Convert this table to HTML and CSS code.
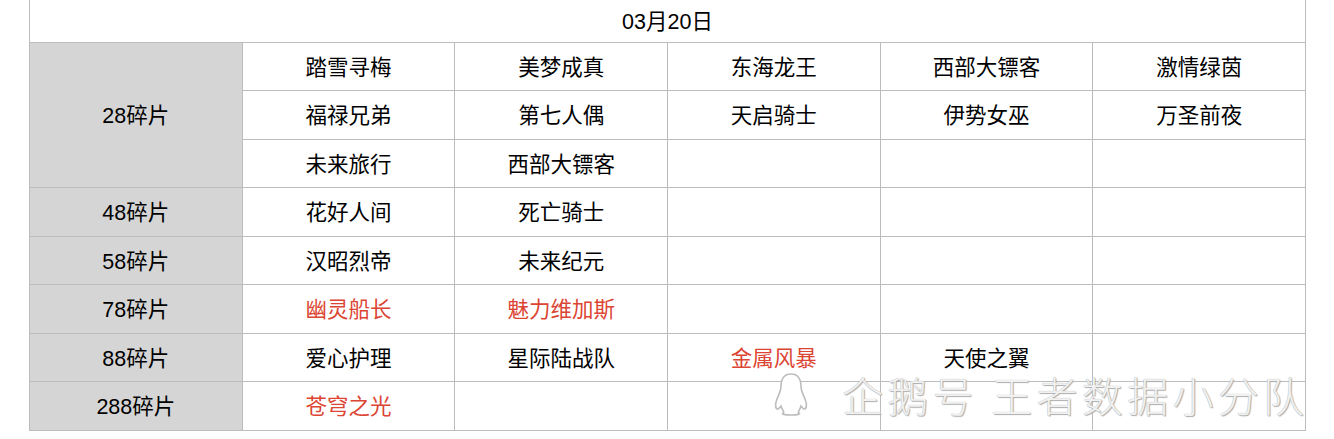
FILE: index.html
```html
<!DOCTYPE html>
<html lang="zh">
<head>
<meta charset="utf-8">
<link rel="stylesheet" href="styles.css">
</head>
<body>
<div class="page">
  <table class="sheet">
    <colgroup><col><col><col><col><col><col></colgroup>
    <tr class="title-row"><td colspan="6" class="title">03月20日</td></tr>
    <tr><td rowspan="3" class="label">28碎片</td><td>踏雪寻梅</td><td>美梦成真</td><td>东海龙王</td><td>西部大镖客</td><td>激情绿茵</td></tr>
    <tr><td>福禄兄弟</td><td>第七人偶</td><td>天启骑士</td><td>伊势女巫</td><td>万圣前夜</td></tr>
    <tr><td>未来旅行</td><td>西部大镖客</td><td></td><td></td><td></td></tr>
    <tr><td class="label">48碎片</td><td>花好人间</td><td>死亡骑士</td><td></td><td></td><td></td></tr>
    <tr><td class="label">58碎片</td><td>汉昭烈帝</td><td>未来纪元</td><td></td><td></td><td></td></tr>
    <tr><td class="label">78碎片</td><td class="red">幽灵船长</td><td class="red">魅力维加斯</td><td></td><td></td><td></td></tr>
    <tr><td class="label">88碎片</td><td>爱心护理</td><td>星际陆战队</td><td class="red">金属风暴</td><td>天使之翼</td><td></td></tr>
    <tr><td class="label">288碎片</td><td class="red">苍穹之光</td><td></td><td></td><td></td><td></td></tr>
  </table>
  <div class="watermark">
    <svg class="penguin" viewBox="0 0 34 44" width="34" height="44">
      <path d="M17 2 C9 2 7 9 7 15 C7 19 5 22 3 27 C1 32 1 37 4 37 C5 37 6 35 7 34 C8 38 11 40 9 41 C7 42 10 43 17 43 C24 43 27 42 25 41 C23 40 26 38 27 34 C28 35 29 37 30 37 C33 37 33 32 31 27 C29 22 27 19 27 15 C27 9 25 2 17 2 Z" fill="#ffffff" stroke="#bdbdbd" stroke-width="1.6"/>
    </svg>
    <span class="wm-text">企鹅号 王者数据小分队</span>
  </div>
</div>
</body>
</html>
```
FILE: styles.css
```css
html, body {
  margin: 0;
  padding: 0;
  background: #ffffff;
}
.page {
  position: relative;
  width: 1334px;
  height: 439px;
  overflow: hidden;
}
.sheet {
  margin-left: 29px;
  width: 1277px;
  border-collapse: collapse;
  table-layout: fixed;
  font-family: "Liberation Sans", "Noto Sans CJK SC", sans-serif;
  font-size: 21.5px;
  line-height: 1.1;
  color: #000000;
}
.sheet td {
  border: 1.5px solid #bcbcbc;
  height: 48.5px;
  padding: 5px 0 0 0;
  text-align: center;
  vertical-align: middle;
  box-sizing: border-box;
}
.sheet .title-row td {
  height: 42px;
  border-top: none;
}
.sheet td.label {
  background: #d5d5d5;
}
.sheet td.red {
  color: #dc4533;
}
.watermark {
  position: absolute;
  left: 774px;
  top: 372px;
  display: flex;
  align-items: center;
  gap: 34px;
}
.penguin {
  display: block;
}
.wm-text {
  font-family: "Noto Sans CJK SC", sans-serif;
  font-size: 41px;
  font-weight: 300;
  line-height: 40px;
  color: #f1f1f1;
  text-shadow: 0 0 1px #9a9a9a, 1px 1px 1px #b0b0b0;
  letter-spacing: 4.3px;
}
```
